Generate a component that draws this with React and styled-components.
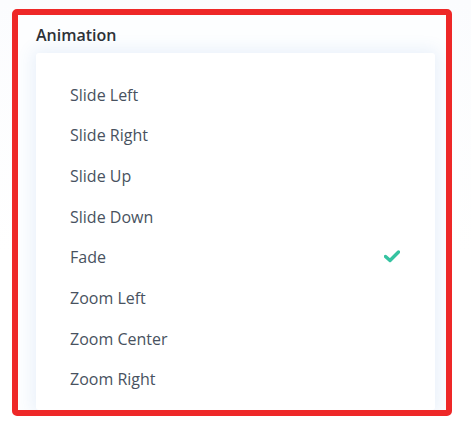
import React from "react";
import styled, { createGlobalStyle } from "styled-components";

const Global = createGlobalStyle`
  html, body { margin: 0; padding: 0; background: #ffffff; }
  body { font-family: "Open Sans", "Noto Sans", sans-serif; overflow: hidden; }
  #root { width: 471px; height: 422px; }
`;

const Page = styled.div`
  width: 471px;
  height: 422px;
  padding: 9px 0 0 12px;
  box-sizing: border-box;
  position: relative;
  background: linear-gradient(180deg, #fbfcfe 0%, #ffffff 60%);
`;

const Frame = styled.div`
  width: 440px;
  height: 407px;
  box-sizing: border-box;
  border: 6px solid #ee2828;
  border-radius: 5px;
  overflow: hidden;
  padding: 10px 11px 0 18px;
  display: flex;
  flex-direction: column;
  gap: 8px;
  background: #fdfeff;
`;

const Label = styled.div`
  font-size: 16px;
  line-height: 20px;
  font-weight: 600;
  color: #2e3238;
`;

const Card = styled.div`
  background: #ffffff;
  border-radius: 3px;
  box-shadow: 0 0 16px 4px rgba(64, 128, 210, 0.1);
  padding: 21.5px 35px 0 34px;
  flex: 1;
  display: flex;
  flex-direction: column;
`;

const Option = styled.div`
  height: 40.7px;
  line-height: 40.7px;
  display: flex;
  align-items: center;
  justify-content: space-between;
  font-size: 16px;
  font-weight: 510;
  color: #485260;
`;

const Check = styled.svg`
  width: 16px;
  height: 13px;
  margin-top: -3px;
`;

const Under = styled.div`
  position: absolute;
  left: 121px;
  top: 414px;
  font-size: 15px;
  line-height: 20px;
  color: #3a4350;
  font-weight: 500;
`;

const options = [
  "Slide Left",
  "Slide Right",
  "Slide Up",
  "Slide Down",
  "Fade",
  "Zoom Left",
  "Zoom Center",
  "Zoom Right",
];

export default function App() {
  return (
    <>
      <Global />
      <Page>
        <Under>oo</Under>
        <Frame>
          <Label>Animation</Label>
          <Card>
            {options.map((o) => (
              <Option key={o}>
                <span>{o}</span>
                {o === "Fade" && (
                  <Check viewBox="0 0 16 13">
                    <path
                      d="M1.5 6.5 L6 10.5 L14.5 2"
                      fill="none"
                      stroke="#35c3a1"
                      strokeWidth="3.4"
                      strokeLinecap="round"
                      strokeLinejoin="round"
                    />
                  </Check>
                )}
              </Option>
            ))}
          </Card>
        </Frame>
      </Page>
    </>
  );
}
